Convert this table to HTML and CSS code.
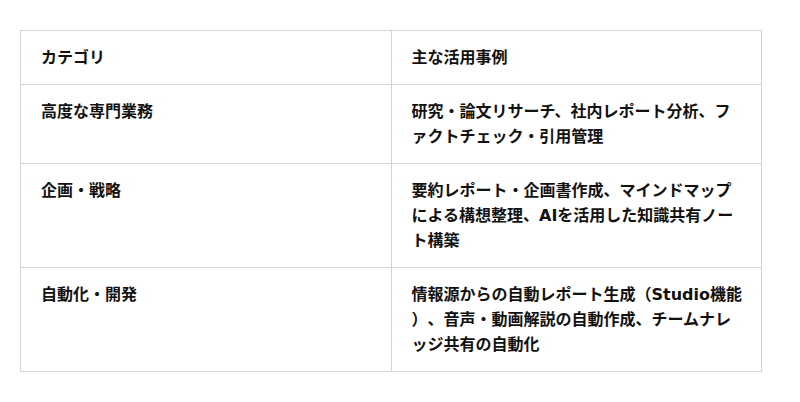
FILE: index.html
```html
<!DOCTYPE html>
<html lang="ja">
<head>
<meta charset="utf-8">
<link rel="stylesheet" href="styles.css">
</head>
<body>
<div class="wrap">
<table class="uses">
<thead>
<tr><th>カテゴリ</th><th>主な活用事例</th></tr>
</thead>
<tbody>
<tr><td>高度な専門業務</td><td>研究・論文リサーチ、社内レポート分析、ファクトチェック・引用管理</td></tr>
<tr><td>企画・戦略</td><td>要約レポート・企画書作成、マインドマップによる構想整理、AIを活用した知識共有ノート構築</td></tr>
<tr><td>自動化・開発</td><td>情報源からの自動レポート生成（Studio機能）、音声・動画解説の自動作成、チームナレッジ共有の自動化</td></tr>
</tbody>
</table>
</div>
</body>
</html>
```
FILE: styles.css
```css
html, body {
  margin: 0;
  padding: 0;
  background: #fff;
}
.wrap {
  padding: 30px 20px;
}
.uses {
  width: 742px;
  border-collapse: collapse;
  table-layout: fixed;
  font-family: "DejaVu Sans", "Noto Sans CJK JP", sans-serif;
  font-size: 16px;
  font-weight: bold;
  color: #111;
  line-height: 25px;
  text-spacing-trim: space-all;
}
.uses th, .uses td {
  border: 1px solid #d4d4d4;
  padding: 14px 18px 14px 20px;
  text-align: left;
  vertical-align: top;
  font-weight: bold;
  width: 50%;
  line-break: anywhere;
}
```
